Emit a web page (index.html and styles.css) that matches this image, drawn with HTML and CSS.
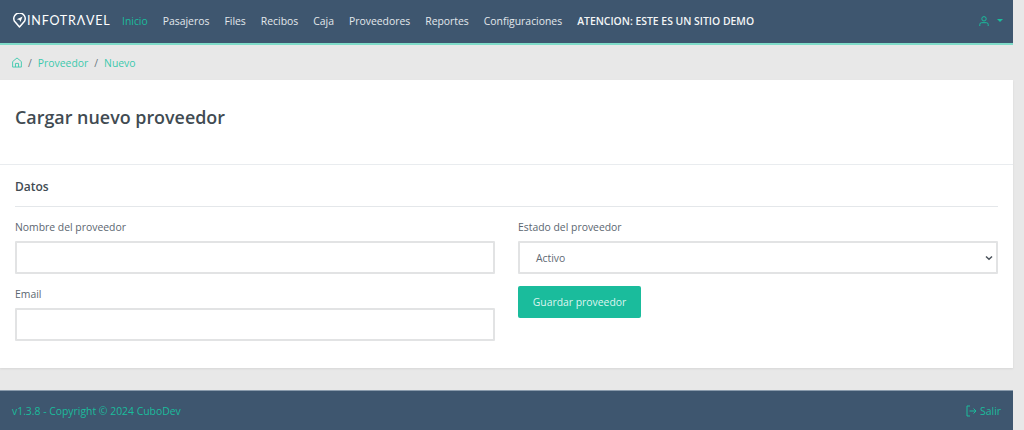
FILE: index.html
```html
<!DOCTYPE html>
<html lang="es">
<head>
<meta charset="utf-8">
<title>Infotravel</title>
<link rel="stylesheet" href="styles.css">
</head>
<body>
<div class="page">
  <header class="navbar">
    <a class="brand" href="#">
      <svg class="brand-pin" width="15" height="15" viewBox="0 0 15 15"><path d="M7.500 14L2.300 8A5.700 5.700 0 1 1 12.700 8Z" fill="none" stroke="#fff" stroke-width="1.500" stroke-linejoin="round"/><path d="M4.800 6.300L10.600 3.500L8.400 9L7.500 7Z" fill="#fff"/></svg>
      <span class="brand-text">INFOTRΛVEL</span>
    </a>
    <nav class="menu">
      <a class="menu-item active" href="#">Inicio</a>
      <a class="menu-item" href="#">Pasajeros</a>
      <a class="menu-item" href="#">Files</a>
      <a class="menu-item" href="#">Recibos</a>
      <a class="menu-item" href="#">Caja</a>
      <a class="menu-item" href="#">Proveedores</a>
      <a class="menu-item" href="#">Reportes</a>
      <a class="menu-item" href="#">Configuraciones</a>
      <strong class="menu-notice">ATENCION: ESTE ES UN SITIO DEMO</strong>
    </nav>
    <a class="user" href="#">
      <svg width="10" height="10" viewBox="0 0 10 10" fill="none" stroke="#1abc9c" stroke-width="1"><circle cx="5" cy="2.800" r="2.200"/><path d="M.8 10V8.500A1.800 1.800 0 0 1 2.600 6.700H7.400A1.800 1.800 0 0 1 9.200 8.500V10"/></svg>
      <span class="caret"></span>
    </a>
  </header>

  <div class="crumbs">
    <svg class="crumb-home" width="10" height="11" viewBox="0 0 11 12" fill="none" stroke="#3dc9ad" stroke-width="1"><path d="M.7 5L5.500 1L10.300 5V11H.7Z" stroke-linejoin="round"/><path d="M3.800 11V7H7.200V11"/></svg>
    <span class="crumb-sep">/</span>
    <a class="crumb" href="#">Proveedor</a>
    <span class="crumb-sep">/</span>
    <a class="crumb" href="#">Nuevo</a>
  </div>

  <main class="card">
    <div class="card-head"><h1>Cargar nuevo proveedor</h1></div>
    <div class="card-body">
      <h2>Datos</h2>
      <form class="form-grid">
        <div class="col">
          <div class="field">
            <label for="nombre">Nombre del proveedor</label>
            <input id="nombre" type="text">
          </div>
          <div class="field">
            <label for="email">Email</label>
            <input id="email" type="text">
          </div>
        </div>
        <div class="col">
          <div class="field">
            <label for="estado">Estado del proveedor</label>
            <div class="select-box" id="estado">
              <span>Activo</span>
              <svg width="8" height="6" viewBox="0 0 8 6" fill="none" stroke="#4a525a" stroke-width="1.500"><path d="M1 1.500L4 4.300L7 1.500"/></svg>
            </div>
          </div>
          <button class="btn" type="button">Guardar proveedor</button>
        </div>
      </form>
    </div>
  </main>

  <footer class="footer">
    <span>v1.3.8 - Copyright © 2024 CuboDev</span>
    <a class="logout" href="#">
      <svg width="11" height="12" viewBox="0 0 11 12" fill="none" stroke="#1abc9c" stroke-width="1"><path d="M4 1H1V11H4"/><path d="M3.500 6H10M7.500 3.500L10 6L7.500 8.500"/></svg>
      Salir
    </a>
  </footer>
</div>
</body>
</html>
```
FILE: styles.css
```css
* { box-sizing: border-box; }
html, body { margin: 0; height: 430px; overflow: hidden; }
body {
  background: #e8e8e8;
  font-family: "Open Sans", sans-serif;
  font-size: 10.400px;
  color: #5b6670;
}
a { text-decoration: none; color: inherit; }
.page {
  width: 1013px;
  height: 430px;
  display: flex;
  flex-direction: column;
}
.navbar {
  height: 45px;
  flex: none;
  display: flex;
  align-items: center;
  padding: 0 10px 2px 12px;
  background: #3e566f;
  border-bottom: 2px solid #7fdcc9;
}
.brand { display: flex; align-items: center; width: 110px; }
.brand-pin { flex: none; }
.brand-text {
  font-family: "Lato", sans-serif;
  font-size: 12.500px;
  font-weight: 400;
  letter-spacing: 0.800px;
  color: #fff;
  white-space: nowrap;
}
.menu { display: flex; align-items: center; gap: 15px; flex: 1; }
.menu-item { color: #e3e8ec; }
.menu-item.active { color: #1abc9c; }
.menu-notice { color: #f3f5f6; font-weight: 600; }
.user { display: flex; align-items: center; gap: 8px; }
.caret {
  width: 0;
  height: 0;
  border: 3px solid transparent;
  border-top: 3px solid #1abc9c;
  border-bottom: 0;
}
.crumbs {
  height: 35px;
  flex: none;
  display: flex;
  align-items: center;
  gap: 6px;
  padding-left: 12px;
}
.crumb { color: #3dc9ad; }
.crumb-sep { color: #6c757d; }
.card {
  height: 288px;
  flex: none;
  background: #fff;
  box-shadow: 0 1px 2px rgba(0, 0, 0, .08);
}
.card-head {
  height: 85px;
  padding: 25px 15px 0;
  border-bottom: 1px solid #e9ecef;
}
h1 {
  margin: 0;
  font-size: 17.900px;
  line-height: 24px;
  font-weight: 600;
  color: #414b52;
}
.card-body { padding: 14px 15px 0; }
h2 {
  margin: 0;
  height: 28px;
  font-size: 12px;
  line-height: 16px;
  font-weight: 600;
  color: #414b52;
  border-bottom: 1px solid #e4e7ea;
}
.form-grid {
  display: grid;
  grid-template-columns: 1fr 1fr;
  column-gap: 23px;
  padding-top: 12px;
}
.field { margin-bottom: 12px; }
label { display: block; line-height: 17px; margin-bottom: 5px; color: #5b6670; }
input, .select-box {
  display: block;
  width: 100%;
  height: 33px;
  border: 2px solid #e2e3e4;
  background: #fff;
  border-radius: 1px;
  outline: 0;
}
.select-box {
  display: flex;
  align-items: center;
  justify-content: space-between;
  padding: 0 3px 0 16px;
  color: #5f6a74;
}
.btn {
  display: block;
  width: 123px;
  height: 32px;
  border: 0;
  border-radius: 2px;
  background: #1abc9c;
  color: #dff5f0;
  font: inherit;
}
.footer {
  height: 40px;
  flex: none;
  margin-top: 22px;
  display: flex;
  align-items: center;
  justify-content: space-between;
  padding: 0 12px;
  background: #3e566f;
  border-top: 1px solid #8a9bac;
  color: #1abc9c;
}
.logout { display: flex; align-items: center; gap: 3px; }
```
